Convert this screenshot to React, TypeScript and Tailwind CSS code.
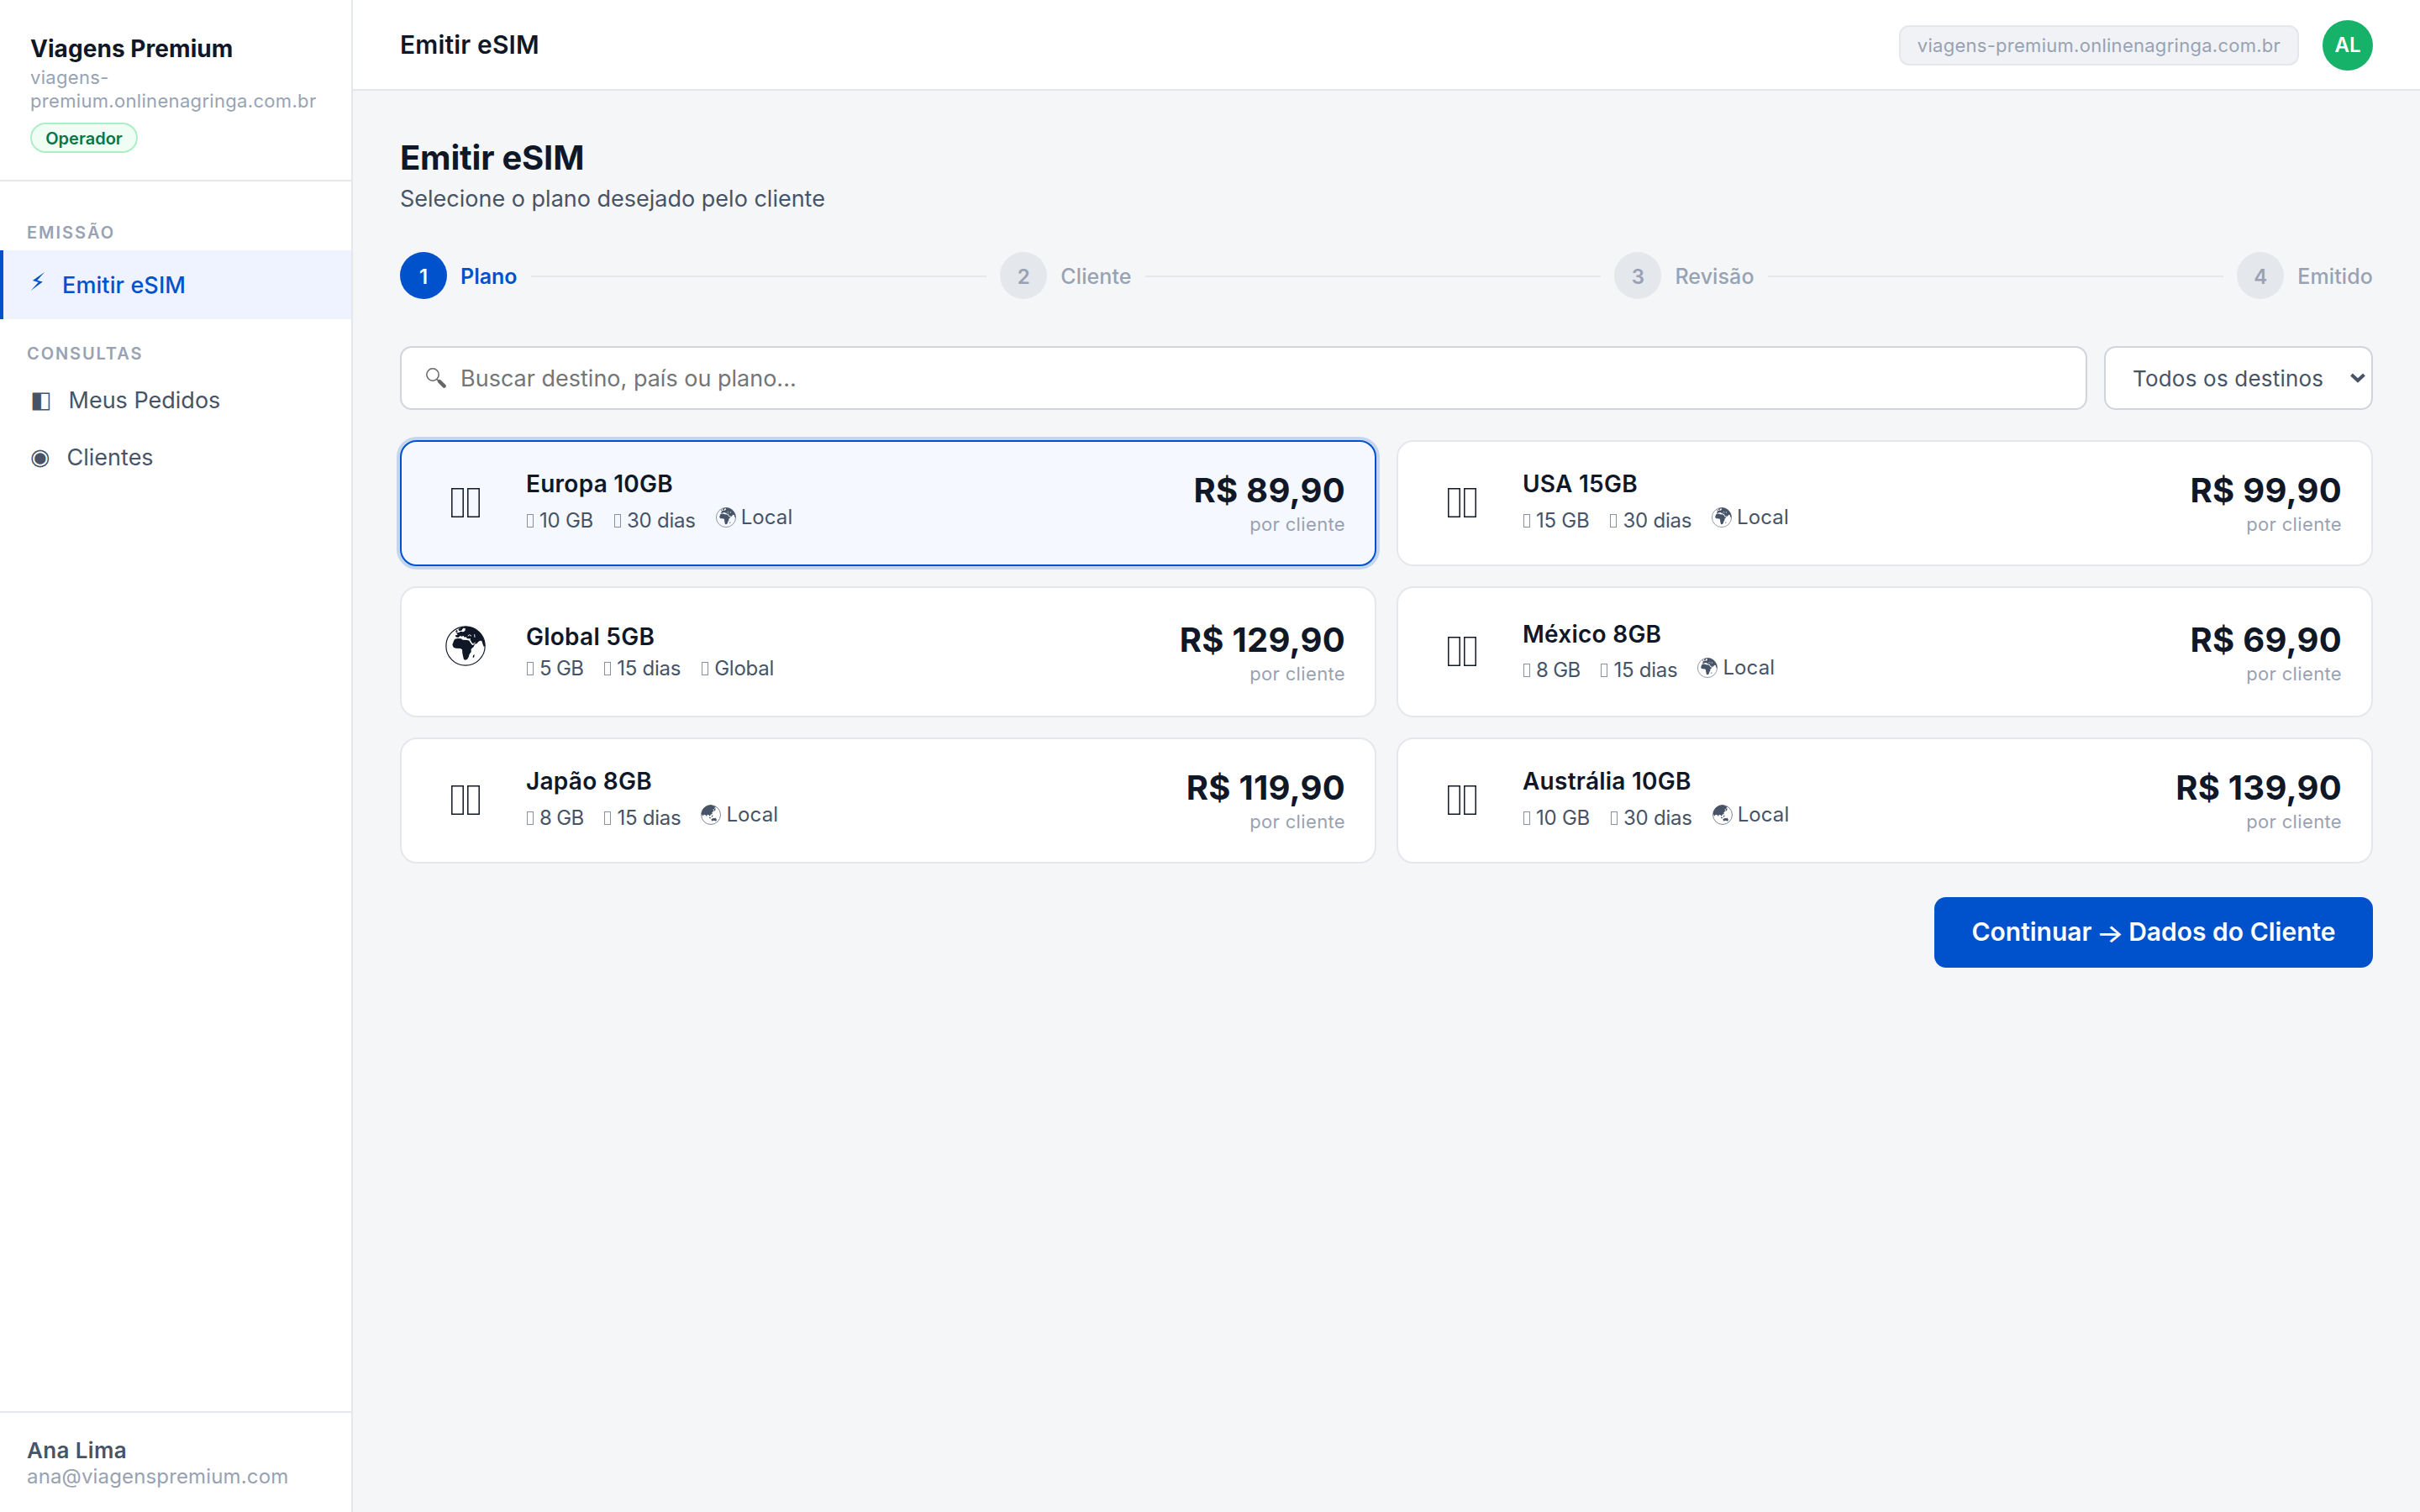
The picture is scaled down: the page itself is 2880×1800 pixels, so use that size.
import { Fragment } from 'react';
import { clsx } from 'clsx';

type Region = 'africa' | 'asia';

interface Plan {
  id: string;
  name: string;
  data: string;
  days: string;
  price: string;
  region?: Region;
  tall?: boolean;
}

const plans: Plan[] = [
  { id: 'eu', name: 'Europa 10GB', data: '10 GB', days: '30 dias', price: 'R$ 89,90', region: 'africa' },
  { id: 'us', name: 'USA 15GB', data: '15 GB', days: '30 dias', price: 'R$ 99,90', region: 'africa' },
  { id: 'global', name: 'Global 5GB', data: '5 GB', days: '15 dias', price: 'R$ 129,90', tall: true },
  { id: 'mx', name: 'México 8GB', data: '8 GB', days: '15 dias', price: 'R$ 69,90', region: 'africa', tall: true },
  { id: 'jp', name: 'Japão 8GB', data: '8 GB', days: '15 dias', price: 'R$ 119,90', region: 'asia' },
  { id: 'au', name: 'Austrália 10GB', data: '10 GB', days: '30 dias', price: 'R$ 139,90', region: 'asia' },
];

const steps = ['Plano', 'Cliente', 'Revisão', 'Emitido'];

function GlobeAfrica({ className }: { className?: string }) {
  return (
    <svg viewBox="30 30 144 144" className={className}>
      <circle cx="102" cy="102" r="69.5" fill="none" stroke="currentColor" strokeWidth="3.5" />
      <g fill="currentColor">
        <path d="M60 84 64 77 74 75 86 76 92 80 108 81 116 83 121 92 126 99 135 97 131 105 122 113 122 124 116 131 113 142 108 150 101 152 96 150 93 138 91 128 90 115 84 111 68 110 60 108 55 98Z" />
        <path d="M104 32C142 33 170 62 172 103L167 104 163 94 160 84 154 83 148 87 142 94 131 97 125 91 119 80 120 76 108 76 104 70 98 71 95 66 88 68 83 66 76 72 67 70 66 64 74 62 69 55 79 54 84 50 94 52 100 48 102 40 94 38 88 47 79 48 76 42 88 35Z" />
        <path d="M67 48 72 44 74 51 68 54ZM129 136 134 132 133 142 128 145Z" />
      </g>
      <g fill="none" stroke="#fff" strokeWidth="3" strokeLinecap="round">
        <path d="M111 66 116 62 122 66M134 62 135 70M117 84 126 96 136 91M92 44 97 41" />
      </g>
    </svg>
  );
}

function GlobeAsia({ className }: { className?: string }) {
  return (
    <svg viewBox="26 26 68 68" className={className}>
      <circle cx="60" cy="60" r="32.5" fill="none" stroke="currentColor" strokeWidth="2" />
      <g fill="currentColor">
        <path d="M28 57C29 40 44 27 61 27L77 33 72 37 73 42 67 41 69 47 64 52 65 57 59 59 57 66 53 61 48 59 46 66 42 61 37 59 33 64Z" />
        <path d="M71 41 76 37 75 45 70 49ZM55 68 61 70 60 72 54 71ZM63 63 67 61 66 67 62 67Z" />
        <path d="M61 75 68 71 72 72 75 70 80 77 77 82 71 79 63 81Z" />
      </g>
    </svg>
  );
}

function FlagBoxes() {
  return (
    <svg viewBox="0 0 34 35" className="mb-px h-[35px] w-[34px] text-[#101828]">
      <path d="M.8.8H14.2V34.2H.8ZM19.8.8H33.2V34.2H19.8Z" fill="none" stroke="currentColor" strokeWidth="1.5" />
    </svg>
  );
}

function Globe({ region, className }: { region: Region; className?: string }) {
  return region === 'africa' ? <GlobeAfrica className={className} /> : <GlobeAsia className={className} />;
}

function Spec({ children }: { children: string }) {
  return (
    <span className={clsx('flex items-center', children.length < 5 && 'tracking-[-0.7px]')}>
      <span className="mr-[7px] ml-px h-4 w-2 border border-[#8791a1]" />
      {children}
    </span>
  );
}

function PlanCard({ plan, selected }: { plan: Plan; selected: boolean }) {
  return (
    <div
      className={clsx(
        'flex items-center rounded-[20px] border-2 pr-[35px] pl-9',
        selected ? 'border-[#0052cc] bg-[#f5f8ff] ring-4 ring-[#0052cc]/20' : 'border-[#e4e7ec] bg-white'
      )}
    >
      <div className="mr-[33px] flex w-[79px] shrink-0 justify-center">
        {plan.region ? <FlagBoxes /> : <GlobeAfrica className="mb-3.5 h-12 w-12 text-[#101828]" />}
      </div>
      <div className={clsx('flex-1', plan.region && (plan.tall ? 'pb-0.5' : 'pb-1'))}>
        <div className="text-[28px] leading-[34px] font-semibold tracking-[0.25px] text-[#101828]">{plan.name}</div>
        <div
          className={clsx(
            'flex items-start gap-6 text-[24px] leading-[30px] tracking-[-0.25px] text-[#475467]',
            plan.region ? 'mt-2' : 'mt-1.5'
          )}
        >
          <div className={clsx('flex gap-6', plan.region && (plan.tall ? 'pt-[3px]' : 'pt-1'))}>
            <Spec>{plan.data}</Spec>
            <Spec>{plan.days}</Spec>
          </div>
          {plan.region ? (
            <span className="flex items-center tracking-[0.1px]">
              <Globe region={plan.region} className="mr-1.5 h-6 w-6" />
              Local
            </span>
          ) : (
            <Spec>Global</Spec>
          )}
        </div>
      </div>
      <div className={clsx('text-right', plan.tall ? 'pt-[3px]' : 'pt-px')}>
        <div className="text-[40px] leading-[49px] font-bold tracking-[0.25px] text-[#101828]">{plan.price}</div>
        <div className="text-[22px] leading-8 tracking-[0.35px] text-[#98a2b3]">por cliente</div>
      </div>
    </div>
  );
}

function Sidebar() {
  return (
    <aside className="flex w-[420px] shrink-0 flex-col border-r-2 border-[#e4e7ec] bg-white">
      <div className="h-[216px] border-b-2 border-[#e4e7ec] px-9 pt-10">
        <div className="text-[28px] leading-[37px] font-bold tracking-[0.06px] text-[#101828]">Viagens Premium</div>
        <div className="pt-px text-[22px] leading-[28px] tracking-[0.32px] text-[#98a2b3]">
          viagens-
          <br />
          premium.onlinenagringa.com.br
        </div>
        <div className="mt-3 flex h-9 w-32 items-center justify-center rounded-full border-2 border-[#abefc6] bg-[#f0fdf4] pt-px text-[20px] font-semibold text-[#067647]">
          Operador
        </div>
      </div>

      <nav className="flex-1 pt-5 text-[27px] text-[#475467]">
        <div className="h-[62px] px-8 pt-[29px] text-[20px] leading-6 font-semibold tracking-[2px] text-[#98a2b3]">
          EMISSÃO
        </div>
        <a className="flex h-[82px] items-center border-l-4 border-[#0052cc] bg-[#eef3ff] pt-[3px] pl-8 font-medium tracking-[0.1px] text-[#0052cc]">
          <svg viewBox="22 43 46 61" className="mr-5 mb-3 h-[22px] w-[18px]">
            <path d="M67 43 28 71 47 76 22 104 61 75 43 70Z" fill="currentColor" />
          </svg>
          Emitir eSIM
        </a>
        <div className="h-[62px] px-8 pt-[29px] text-[20px] leading-6 font-semibold tracking-[1.9px] text-[#98a2b3]">
          CONSULTAS
        </div>
        <a className="flex h-[68px] items-center gap-5 pl-9">
          <span className="font-['DejaVu_Sans',sans-serif]">◧</span>
          <span className="pt-0.5">Meus Pedidos</span>
        </a>
        <a className="flex h-[68px] items-center gap-5 pl-9">
          <span className="font-['DejaVu_Sans',sans-serif]">◉</span>
          <span className="pt-0.5">Clientes</span>
        </a>
      </nav>

      <div className="h-[120px] border-t-2 border-[#e4e7ec] px-8 pt-[29px]">
        <div className="text-[26px] leading-8 font-semibold tracking-[0.35px] text-[#475467]">Ana Lima</div>
        <div className="text-[24px] leading-[29px] tracking-[0.15px] text-[#98a2b3]">ana@viagenspremium.com</div>
      </div>
    </aside>
  );
}

export default function App() {
  return (
    <div className="flex h-[1800px] w-[2880px] overflow-hidden bg-[#f5f6f8] font-[Inter,sans-serif]">
      <Sidebar />

      <div className="flex flex-1 flex-col">
        <header className="flex h-[108px] items-center justify-between border-b-2 border-[#e4e7ec] bg-white px-14">
          <h1 className="pt-px text-[30px] font-semibold tracking-[0.15px] text-[#101828]">Emitir eSIM</h1>
          <div className="flex items-center gap-7 pt-0.5">
            <span className="flex h-12 w-[476px] items-center justify-center rounded-xl border-2 border-[#e4e7ec] bg-[#f0f2f5] text-[22px] tracking-[0.27px] text-[#98a2b3]">
              viagens-premium.onlinenagringa.com.br
            </span>
            <span className="flex size-[60px] items-center justify-center rounded-full bg-[#17b26a] text-[24px] font-semibold text-white">
              AL
            </span>
          </div>
        </header>

        <main className="px-14 pt-14">
          <h2 className="text-[40px] leading-[48px] font-bold tracking-[-0.2px] text-[#101828]">Emitir eSIM</h2>
          <p className="mt-2 text-[27px] leading-[33px] text-[#475467]">
            Selecione o plano desejado pelo cliente
          </p>

          {/* Steps */}
          <div className="mt-[47px] flex h-14 items-center gap-4 text-[25px]">
            {steps.map((step, i) => (
              <Fragment key={step}>
                {i > 0 && <div className="mt-0.5 h-0.5 flex-1 bg-[#e4e7ec]" />}
                <div className="flex items-center gap-4">
                  <span
                    className={clsx(
                      'flex size-14 items-center justify-center rounded-full pt-[3px] text-[24px] font-semibold',
                      i === 0 ? 'bg-[#0052cc] text-white' : 'bg-[#e4e7ec] text-[#98a2b3]'
                    )}
                  >
                    {i + 1}
                  </span>
                  <span
                    className={clsx(
                      'pt-[3px]',
                      i === 0 ? 'font-semibold text-[#0052cc]' : 'font-medium tracking-[0.1px] text-[#98a2b3]'
                    )}
                  >
                    {step}
                  </span>
                </div>
              </Fragment>
            ))}
          </div>

          {/* Filters */}
          <div className="mt-14 flex h-[76px] gap-5">
            <div className="flex flex-1 items-center rounded-[14px] border-2 border-[#d0d5dd] bg-white pl-[29px]">
              <svg viewBox="0 0 24 24" className="mr-[17px] size-6 text-[#666]">
                <circle cx="8" cy="8" r="7.2" fill="none" stroke="currentColor" strokeWidth="1.5" />
                <path d="M12.6 13.2 16 16.5" stroke="currentColor" strokeWidth="1.6" />
                <path d="M16 16 21.6 21.6" stroke="currentColor" strokeWidth="4.4" strokeLinecap="round" />
              </svg>
              <input
                className="flex-1 pt-0.5 text-[27px] outline-none placeholder:text-[#757575]"
                placeholder="Buscar destino, país ou plano..."
              />
            </div>
            <button className="flex w-80 items-center justify-between rounded-[14px] border-2 border-[#d0d5dd] bg-white pr-[7px] pl-8 text-[26px] tracking-[0.2px] text-[#475467]">
              Todos os destinos
              <svg viewBox="0 0 18 12" className="h-3 w-[18px]">
                <path d="M1.5 2 9 9 16.5 2" fill="none" stroke="currentColor" strokeWidth="4" />
              </svg>
            </button>
          </div>

          {/* Plans */}
          <div className="mt-9 grid grid-cols-2 grid-rows-[150px_156px_150px] gap-6">
            {plans.map((plan) => (
              <PlanCard key={plan.id} plan={plan} selected={plan.id === 'eu'} />
            ))}
          </div>

          <div className="mt-10 flex justify-end">
            <button className="h-[84px] w-[522px] rounded-[14px] bg-[#0052cc] pb-0.5 text-[30px] font-semibold text-white">
              Continuar <span className="inline-block translate-y-0.5 scale-x-[1.15] font-medium">→</span> Dados do Cliente
            </button>
          </div>
        </main>
      </div>
    </div>
  );
}
